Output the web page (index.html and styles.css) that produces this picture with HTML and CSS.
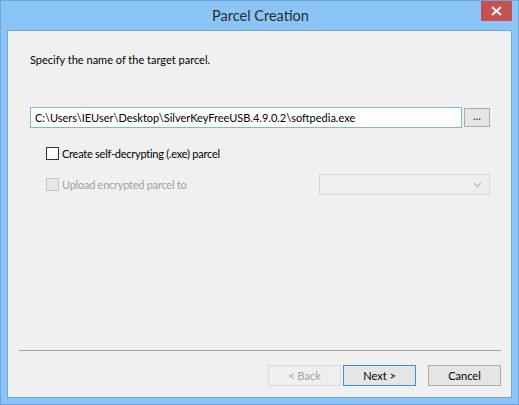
FILE: index.html
```html
<!DOCTYPE html>
<html lang="en">
<head>
  <meta charset="UTF-8" />
  <title>Parcel Creation</title>
  <link rel="stylesheet" href="styles.css">
</head>
<body>
  <div class="window">
    <div class="titlebar">
      <span></span>
      <span class="title">Parcel Creation</span>
      <button class="close" title="Close">
        <svg width="11" height="10" viewBox="0 0 11 10">
          <path d="M1 1 L10 9 M10 1 L1 9" stroke="#fff" stroke-width="2"/>
        </svg>
      </button>
    </div>

    <div class="client">
      <p class="prompt">Specify the name of the target parcel.</p>

      <div class="path-row">
        <input class="path" type="text" value="C:\Users\IEUser\Desktop\SilverKeyFreeUSB.4.9.0.2\softpedia.exe" />
        <button class="browse">...</button>
      </div>

      <label class="check-row">
        <span class="box"></span>
        <span>Create self-decrypting (.exe) parcel</span>
      </label>

      <div class="upload-row">
        <label class="check-row disabled">
          <span class="box"></span>
          <span>Upload encrypted parcel to</span>
        </label>
        <div class="select">
          <svg width="9" height="6" viewBox="0 0 9 6">
            <path d="M1 1 L4.5 4.5 L8 1" stroke="#c2c2c2" stroke-width="1.6" fill="none"/>
          </svg>
        </div>
      </div>

      <div class="spacer"></div>

      <hr class="sep" />

      <div class="buttons">
        <button class="btn" disabled>&lt; Back</button>
        <button class="btn default">Next &gt;</button>
        <button class="btn cancel">Cancel</button>
      </div>
    </div>
  </div>
</body>
</html>
```

FILE: styles.css
```css
* {
  box-sizing: border-box;
}
body {
  margin: 0;
  font-family: Lato, "Noto Sans", sans-serif;
  font-size: 11px;
  color: #000;
}
.window {
  width: 519px;
  height: 405px;
  border: 1px solid #6fa7dc;
  background-color: #8bc5f7;
  padding: 0 6px 6px 6px;
  display: flex;
  flex-direction: column;
}
.titlebar {
  height: 29px;
  display: grid;
  grid-template-columns: 1fr auto 1fr;
}
.title {
  font-size: 14.5px;
  color: #2b2b2b;
  line-height: 30px;
  margin-left: 2px;
}
.close {
  justify-self: end;
  width: 31px;
  height: 20px;
  border: none;
  padding: 0;
  background-color: #c75050;
  display: flex;
  align-items: center;
  justify-content: center;
}
.client {
  flex: 1;
  border: 1px solid #6fa7dc;
  background-color: #f0f0f0;
  display: flex;
  flex-direction: column;
}
.prompt {
  margin: 21px 0 0 22px;
  line-height: 15px;
  height: 15px;
}
.path-row {
  display: flex;
  align-items: flex-start;
  gap: 2px;
  margin: 40px 0 0 22px;
}
.path {
  width: 432px;
  height: 21px;
  border: 1px solid #7eb4ea;
  background: #fff;
  font: inherit;
  padding: 0 0 0 4px;
  outline: none;
}
.browse {
  width: 26px;
  height: 19px;
  margin-top: 1px;
  border: 1px solid #adadad;
  background-color: #e5e5e5;
  font: inherit;
  padding: 0 0 4px 0;
  line-height: 12px;
  color: #1a1a1a;
}
.check-row {
  display: flex;
  align-items: center;
  gap: 3px;
  margin: 19px 0 0 38px;
  height: 13px;
  line-height: 13px;
  letter-spacing: -0.25px;
}
.box {
  width: 13px;
  height: 13px;
  border: 1px solid #333;
  background: #fff;
}
.upload-row {
  display: flex;
  align-items: center;
  margin-top: 14px;
  height: 21px;
}
.upload-row .check-row {
  margin-top: 0;
  width: 273px;
}
.disabled {
  color: #a0a0a0;
}
.disabled .box {
  border-color: #c4c4c4;
  background: #e6e6e6;
}
.select {
  width: 171px;
  height: 21px;
  border: 1px solid #d9d9d9;
  background: #efefef;
  display: flex;
  align-items: center;
  justify-content: flex-end;
  padding-right: 7px;
}
.spacer {
  flex: 1;
}
.sep {
  margin: 0 10px 0 11px;
  border: none;
  border-top: 1px solid #a0a0a0;
  height: 1px;
}
.buttons {
  display: flex;
  justify-content: flex-end;
  gap: 2px;
  padding: 14px 10px 11px 0;
}
.btn {
  width: 73px;
  height: 21px;
  border: 1px solid #acacac;
  background-color: #e5e5e5;
  font: inherit;
  color: #000;
  padding: 0;
}
.btn:disabled {
  border-color: #d9d9d9;
  background-color: #efefef;
  color: #a0a0a0;
}
.default {
  border-color: #3c8ee6;
}
.cancel {
  margin-left: 10px;
}
```
